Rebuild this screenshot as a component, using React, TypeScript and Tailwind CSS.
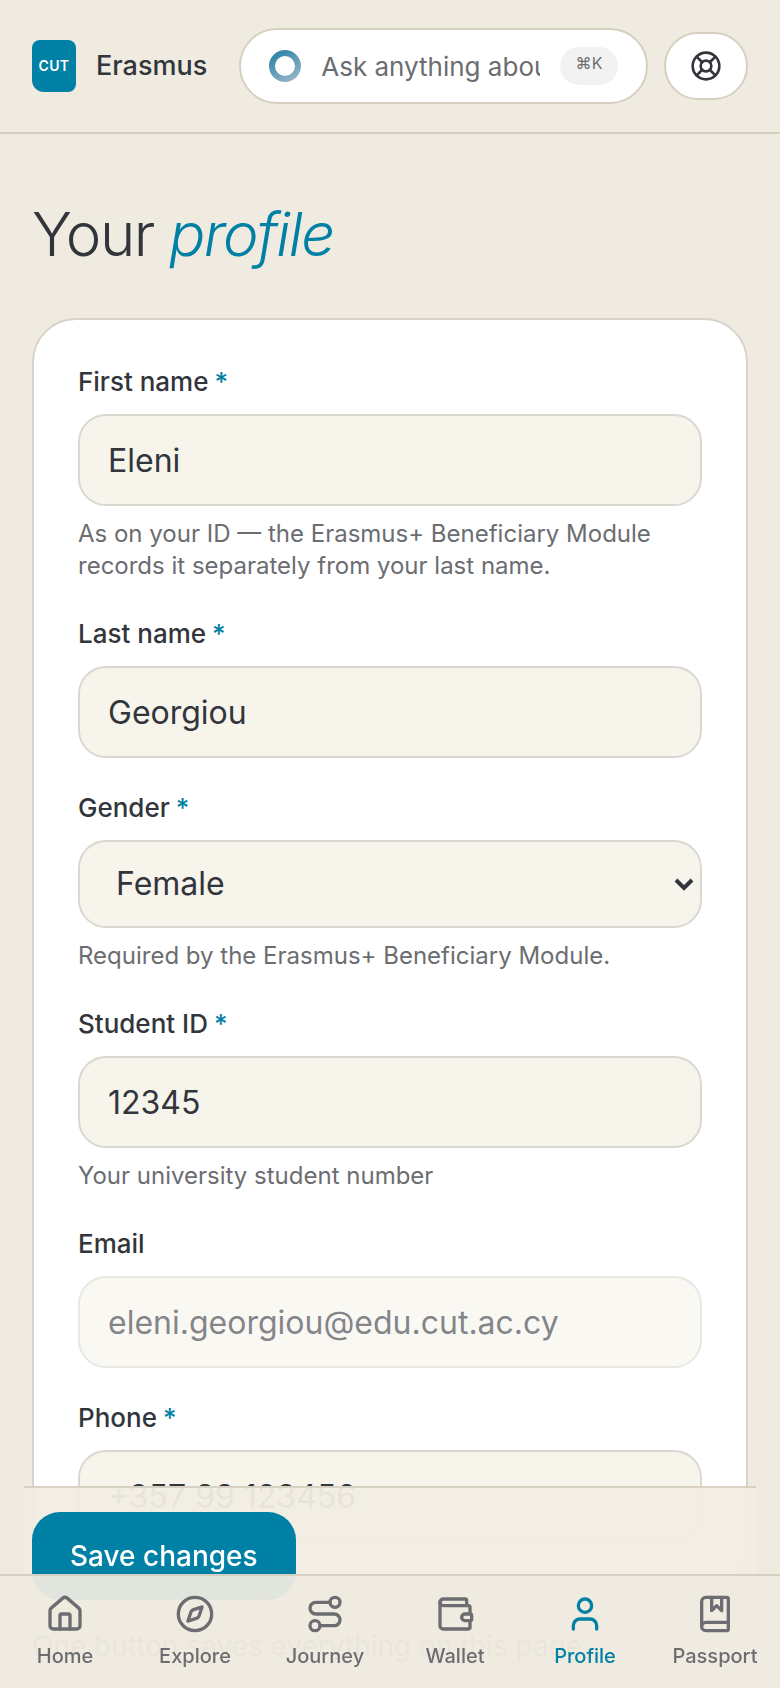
import {
  BookMarked,
  ChevronDown,
  Compass,
  House,
  LifeBuoy,
  Route,
  User,
  Wallet,
} from "lucide-react";
import React from "react";

const navItems = [
  { label: "Home", icon: House },
  { label: "Explore", icon: Compass },
  { label: "Journey", icon: Route },
  { label: "Wallet", icon: Wallet },
  { label: "Profile", icon: User, active: true },
  { label: "Passport", icon: BookMarked },
];

const control =
  "block w-full rounded-[28px] border-2 border-[#d9d8d0] bg-[#f7f4ec] text-[32px] text-[#32353b] placeholder:text-[#32353b]";

type FieldProps = {
  id: string;
  label: string;
  required?: boolean;
  hint?: string;
  children: React.ReactNode;
};

const Field = ({ id, label, required, hint, children }: FieldProps) => {
  return (
    <div>
      <label
        htmlFor={id}
        className="block mb-3.5 text-[26px] leading-9 font-medium"
      >
        {label}
        {required && <span className="ml-1.5 text-[#0080a5]">*</span>}
      </label>
      {children}
      {hint && (
        <p className="mt-3 pb-0.5 text-2xl leading-8 text-[#6b6d71]">{hint}</p>
      )}
    </div>
  );
};

const App = () => {
  return (
    <div className="min-h-screen bg-[#efebe0] text-[#32353b] font-['Inter',sans-serif]">
      <header className="flex items-center px-8 py-7 border-b-2 border-[#d6d0c0]">
        <a href="#" className="flex items-center gap-5">
          <span className="flex items-center justify-center w-11 h-[52px] rounded-lg rounded-bl-xl bg-[#0080a5] text-sm font-semibold tracking-wide text-white">
            CUT
          </span>
          <span className="text-[27px] leading-9 font-medium">Erasmus</span>
        </a>
        <div className="flex items-center flex-1 min-w-0 h-[76px] ml-8 px-7 bg-white border-2 border-[#d6d0c0] rounded-full">
          <svg viewBox="0 0 32 32" className="w-8 h-8 shrink-0">
            <defs>
              <linearGradient id="orb" x1="0.2" y1="0" x2="0.8" y2="1">
                <stop offset="0" stopColor="#3286a8" />
                <stop offset="1" stopColor="#92b2c5" />
              </linearGradient>
            </defs>
            <circle
              cx="16"
              cy="16"
              r="13"
              fill="none"
              stroke="url(#orb)"
              strokeWidth="6"
            />
          </svg>
          <input
            type="text"
            aria-label="Ask anything"
            placeholder="Ask anything about Erasmus"
            className="flex-1 w-0 min-w-0 mx-5 text-[26px] placeholder:text-[#6b6d71]"
          />
          <kbd className="flex justify-center shrink-0 w-[58px] h-[38px] pt-1 rounded-full bg-[#f2f2f2] font-['Inter',sans-serif] text-base leading-6 text-[#6b6d71]">
            ⌘K
          </kbd>
        </div>
        <button
          type="button"
          aria-label="Help"
          className="flex items-center justify-center w-[84px] h-[68px] ml-4 bg-white border-2 border-[#d6d0c0] rounded-full shrink-0"
        >
          <LifeBuoy className="w-8 h-8" strokeWidth={2} />
        </button>
      </header>

      <main className="px-8 pt-16 pb-56">
        <h1 className="text-[60px] leading-[72px] font-light tracking-tight">
          Your <em className="text-[#0080a5]">profile</em>
        </h1>
        <form
          id="profile-form"
          className="mt-12 p-11 space-y-8 bg-white border-2 border-[#d9d2c8] rounded-[44px]"
        >
          <Field
            id="first-name"
            label="First name"
            required
            hint="As on your ID — the Erasmus+ Beneficiary Module records it separately from your last name."
          >
            <input
              id="first-name"
              type="text"
              defaultValue="Eleni"
              className={`${control} h-[92px] px-7`}
            />
          </Field>
          <Field id="last-name" label="Last name" required>
            <input
              id="last-name"
              type="text"
              defaultValue="Georgiou"
              className={`${control} h-[92px] px-7`}
            />
          </Field>
          <Field
            id="gender"
            label="Gender"
            required
            hint="Required by the Erasmus+ Beneficiary Module."
          >
            <div className="relative">
              <select
                id="gender"
                defaultValue="Female"
                className={`${control} h-[88px] px-9 appearance-none`}
              >
                <option>Female</option>
                <option>Male</option>
              </select>
              <ChevronDown
                className="absolute w-8 h-8 -translate-y-1/2 pointer-events-none right-0.5 top-1/2"
                strokeWidth={3}
                strokeLinecap="butt"
                strokeLinejoin="miter"
              />
            </div>
          </Field>
          <Field
            id="student-id"
            label="Student ID"
            required
            hint="Your university student number"
          >
            <input
              id="student-id"
              type="text"
              defaultValue="12345"
              className={`${control} h-[92px] px-7`}
            />
          </Field>
          <Field id="email" label="Email">
            <input
              id="email"
              type="email"
              disabled
              defaultValue="eleni.georgiou@edu.cut.ac.cy"
              className={`${control} h-[92px] px-7 opacity-60`}
            />
          </Field>
          <Field id="phone" label="Phone" required>
            <input
              id="phone"
              type="tel"
              placeholder="+357 99 123456"
              className={`${control} h-[92px] px-7`}
            />
          </Field>
        </form>
      </main>

      <div className="fixed bottom-0 px-2 pt-6 pb-6 border-t-2 inset-x-6 bg-[#f1ede3]/95 border-[#d9d2c3]">
        <button
          type="submit"
          form="profile-form"
          className="block h-[88px] px-[38px] rounded-[28px] bg-[#0080a5] text-[28px] font-medium text-white"
        >
          Save changes
        </button>
        <p className="mt-7 text-[28px] leading-9 text-[#8b8c8c]">
          One button saves everything on this page.
        </p>
      </div>

      <nav className="fixed inset-x-0 bottom-0 grid grid-cols-6 py-[18px] border-t-2 bg-[#efebe0]/94 border-[#d6d0c0]">
        {navItems.map(({ label, icon: Icon, active }) => (
          <a
            key={label}
            href="#"
            className={`flex flex-col items-center gap-2 text-xl leading-7 font-medium ${
              active ? "text-[#0080a5]" : "text-[#6b6d71]"
            }`}
          >
            <Icon className="w-10 h-10" strokeWidth={2} />
            {label}
          </a>
        ))}
      </nav>
    </div>
  );
};

export default App;
